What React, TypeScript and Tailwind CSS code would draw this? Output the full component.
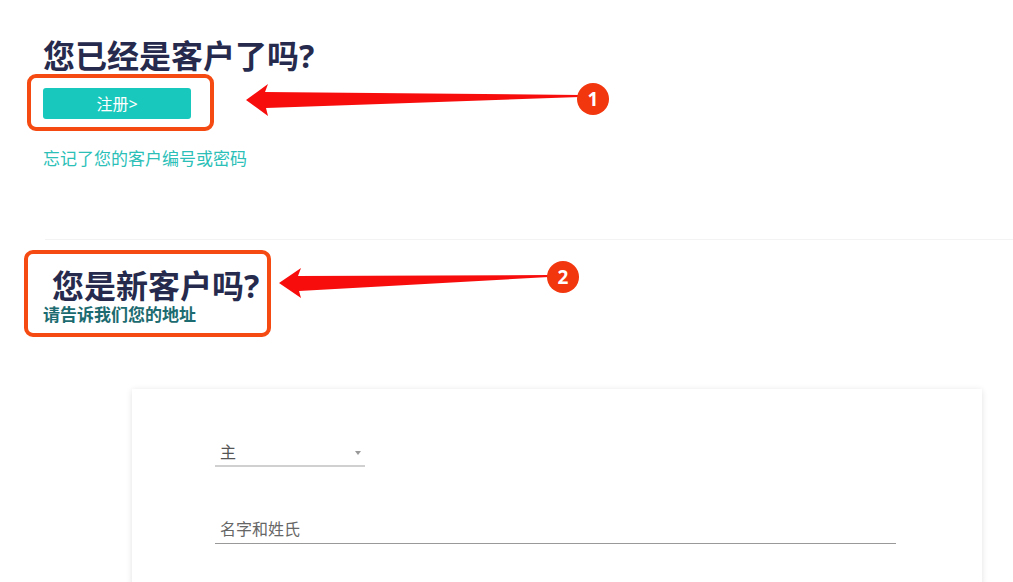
import React from 'react';

const font = { fontFamily: '"Noto Sans", "Noto Sans CJK SC", sans-serif' };

function Badge({ n }: { n: number }) {
  return (
    <div className="absolute flex h-[32px] w-[32px] items-center justify-center rounded-full bg-[#f2370f] text-[19px] font-bold leading-none text-white">
      {n}
    </div>
  );
}

export default function App() {
  return (
    <div className="relative min-h-[582px] w-full overflow-hidden bg-white" style={font}>
      {/* existing customer */}
      <section className="pl-[43px] pt-[36px]">
        <h1 className="text-[32px] font-bold leading-[40px] text-[#262b4e]">您已经是客户了吗?</h1>
        <button className="mt-[12px] flex h-[31px] w-[148px] items-center justify-center rounded-[3px] bg-[#18c8bc] text-[16px] text-white">
          注册&gt;
        </button>
        <a className="mt-[28px] block text-[17px] leading-[24px] text-[#2bbfb8]">忘记了您的客户编号或密码</a>
      </section>

      {/* new customer */}
      <section className="ml-[45px] mt-[68px] border-t border-[#f3f3f3] pt-[27px]">
        <h2 className="ml-[7px] text-[32px] font-bold leading-[38px] text-[#262b4e]">您是新客户吗?</h2>
        <p className="-ml-[2px] text-[17px] font-bold leading-[20px] text-[#1c6b70]">请告诉我们您的地址</p>
      </section>

      <div className="ml-[132px] mt-[64px] w-[850px] bg-white pb-[60px] pl-[83px] pr-[86px] pt-[52px] shadow-[0_1px_6px_rgba(0,0,0,0.12)]">
        <div className="flex w-[150px] items-center justify-between border-b-2 border-[#d0d0d0] pb-[2px] pl-[5px] pr-[4px]">
          <span className="text-[16px] leading-[22px] text-[#555]">主</span>
          <span className="mt-[2px] h-0 w-0 border-x-[3px] border-t-[4px] border-x-transparent border-t-[#999]" />
        </div>
        <div className="mt-[50px] border-b border-[#999] pb-[2px] pl-[5px]">
          <span className="text-[16px] leading-[22px] text-[#666]">名字和姓氏</span>
        </div>
      </div>

      {/* annotations */}
      <div className="pointer-events-none absolute left-[27px] top-[74px] h-[57px] w-[187px] rounded-[9px] border-[4px] border-[#f54a12]" />
      <div className="pointer-events-none absolute left-[24px] top-[250px] h-[87px] w-[247px] rounded-[9px] border-[4px] border-[#f54a12]" />

      <svg className="pointer-events-none absolute left-0 top-0" width="1013" height="582">
        <polygon points="246,100 268,84 265,92 580,95 580,97 266,108 268,116" fill="#f80d0d" />
        <polygon points="279,283 301,268 298,276 549,275 549,277 299,291 301,298" fill="#f80d0d" />
      </svg>
      <div className="absolute left-[577px] top-[83px]">
        <Badge n={1} />
      </div>
      <div className="absolute left-[547px] top-[261px]">
        <Badge n={2} />
      </div>
    </div>
  );
}
